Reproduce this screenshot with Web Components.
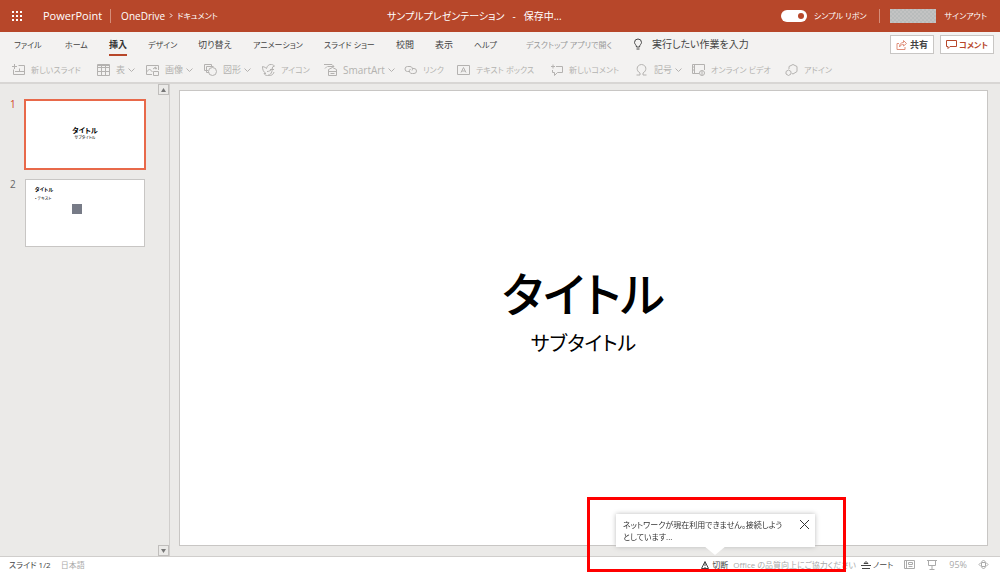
<!DOCTYPE html>
<html lang="ja">
<head>
<meta charset="utf-8">
<title>サンプルプレゼンテーション</title>
<style>
html,body{height:100%}
body{margin:0;font-family:"Open Sans","Noto Sans CJK JP",sans-serif;font-feature-settings:"palt";font-size:10px;line-height:14px;color:#444;background:#ebeae8;overflow:hidden}
</style>
</head>
<body>
<ppt-app></ppt-app>
<script>
const reset = `:host,*{box-sizing:border-box}button,input{font:inherit;font-feature-settings:inherit;color:inherit;border:0;background:none;padding:0;margin:0}button{white-space:nowrap}a{color:inherit;text-decoration:none}svg{display:block;flex:none;fill:none;stroke:currentColor}`;
const define = (name, html) => customElements.define(name, class extends HTMLElement {
  constructor() {
    super();
    const t = document.createElement('template');
    t.innerHTML = typeof html === 'function' ? html(this) : html;
    this.attachShadow({mode: 'open'}).append(t.content.cloneNode(true));
  }
});

const icons = {
  slide: '<path d="M1.500 6.500v5h11v-9h-6M0 3.500h5M2.500 1v5M3 8.500h9M7.500 5.500v3"/>',
  table: '<path d="M.5 1.500h12v11H.5zM.5 4.500h12M.5 8.500h12M4.500 1.500v11M8.500 1.500v11"/><path d="M.5 2.500h12"/>',
  image: '<path d="M6 11.500H.5v-9h12V7M.5 9l3-3 3 3M7.500 8.500h5v4h-5zM7 6l2-1.500L11 6"/><circle cx="9.500" cy="5" r=".7"/>',
  shapes: '<path d="M4 7.500H.5v-6h7V4M5 9.500H2.500v-6h7"/><circle cx="8.500" cy="8.500" r="4"/>',
  bird: '<path d="M.5 3.500c2 .5 3 1 4 2C5 3 7 1 9.500 1.500c1.500 0 2 1 3 1.500l-2 1c0 5-2 8.500-5 8.500-2 0-3-1-3.500-2h2C1.500 9 .5 7 .5 3.500zM5 8.500c2 0 4-1 5-3M6 12c2 1 5 .5 6-3M8 6.500h4"/>',
  smart: '<path d="M0 1.500h8l2 2H3.500M1 5.500l2-2M4.500 12.500v-6l4-2 4 2v6zM4.500 8.500h8M6.500 10.500h4"/>',
  link: '<path d="M6 8.500H3.500a2.500 2.500 0 0 1 0-5H6a2.500 2.500 0 0 1 2 4M6.500 6a2.500 2.500 0 0 0 2 4.500H10a2.500 2.500 0 0 0 0-5H8.500"/>',
  textbox: '<path d="M.5 2.500h12v9H.5zM4 9.500l2.500-5 2.500 5M5 8h3"/>',
  comment: '<path d="M6 3.500h6.500v6h-5l-3 3v-3h-2V7M1 3.500h4M3 1.500v4"/>',
  omega: '<path d="M1.500 12h3.500V10C1 8 1 2 6.500 1.500 12 2 12 8 8 10v2h3.500"/>',
  video: '<path d="M7 10.500H.5v-9h12V7M2.500 1.500v9M.5 4h2M.5 7h2"/><circle cx="10" cy="10" r="2.500"/><path d="M10 8v4"/>',
  addin: '<path d="M4 6V3.500l4-2 4 2v5l-4 2.500-1-.5"/><path d="M3.500 7l2.500 1.500v2.500L3.500 12.500 1 11V8.500z"/>'
};

define('app-header', `<style>${reset}
:host{display:grid;grid-template-columns:387px 1fr auto;align-items:center;height:32px;background:#b7472a;color:#fff}
nav,.right{display:flex;align-items:center}
.name{font-size:11px;margin:0 8px 0 20px}
.rule{width:1px;height:14px;background:#d58d79}
nav{padding-left:11px}
nav .rule{margin-right:10px}
.sep{margin:0 4px}
.doc{display:flex;gap:8px;white-space:nowrap}
label{display:flex;align-items:center;gap:7px}
input{appearance:none;width:26px;height:12px;border-radius:6px;background:#fff;position:relative}
input::after{content:"";position:absolute;right:3px;top:3px;width:6px;height:6px;border-radius:50%;background:#b7472a}
.right{padding-right:13px;white-space:nowrap;font-size:8px}
.right .rule{margin:0 10px 0 13px}
.user{width:46px;height:14px;background:repeating-conic-gradient(#b9bcbc 0 25%,#c3c3c3 0 50%) 0 0/4px 4px;margin-right:8px}
.crumb{font-size:8px}
</style>
<nav aria-label="パス">
<button aria-label="アプリ起動ツール"><svg width="12" height="12" style="fill:#fff;stroke:none"><path d="M1 1h2v2H1zM5 1h2v2H5zM9 1h2v2H9zM1 5h2v2H1zM5 5h2v2H5zM9 5h2v2H9zM1 9h2v2H1zM5 9h2v2H5zM9 9h2v2H9z"/></svg></button>
<a class="name" href="#">PowerPoint</a><span class="rule"></span><a href="#">OneDrive</a>
<svg class="sep" width="4" height="8"><path d="M1 1.500l2 2-2 2"/></svg><a class="crumb" href="#">ドキュメント</a></nav>
<div class="doc"><span>サンプルプレゼンテーション</span><span>-</span><span>保存中...</span></div>
<div class="right"><label><input type="checkbox" role="switch" checked><span>シンプル リボン</span></label><span class="rule"></span><span class="user"></span><a href="#">サインアウト</a></div>`);

define('ribbon-tab', e => `<style>${reset}
:host{display:block}
button{height:24px;padding-top:3px;border-bottom:2px solid transparent;font-size:9px}
:host([compact]) button{font-size:8px}
:host([selected]) button{font-weight:700;color:#333;border-color:#b7472a}
:host([muted]) button{color:#999}
</style><button role="tab" aria-selected="${e.hasAttribute('selected')}"><slot></slot></button>`);

define('ribbon-tool', e => `<style>${reset}
:host{display:block;color:#b4b2b0}
button{display:flex;align-items:center;height:24px;font-size:9px;color:inherit}
:host([compact]) button{font-size:8px}
:host([latin]) button{font-size:10px}
.icon{margin-right:5px}
.chev{margin-left:3px}
</style><button disabled><svg class="icon" width="14" height="14" aria-hidden="true">${icons[e.getAttribute('icon')]}</svg><slot></slot>${e.hasAttribute('menu') ? '<svg class="chev" width="7" height="6"><path d="M.5 1.500l3 3 3-3"/></svg>' : ''}</button>`);

define('app-ribbon', `<style>${reset}
:host{display:block;height:52px;background:#f3f2f1;border-bottom:2px solid #d8d6d4}
.top{display:flex;justify-content:space-between;padding:0 6px 0 14px;height:25px}
.tabs{display:grid;grid-template-columns:51px 44px 39px 50px 55px 71px 72px 39px 39px 52px 107px auto}
label{display:flex;align-items:center;height:24px;gap:9px}
input{width:120px}
input::placeholder{color:#444;opacity:1}
.actions{display:flex;gap:6px;padding-top:3px}
.actions button{display:flex;align-items:center;justify-content:center;gap:3px;height:19px;padding:0 5px;border:1px solid #c8c6c4;background:#fff;font-size:9px;font-weight:700}
.actions .c{color:#b7472a;gap:2px;font-size:8px}
.share{color:#e0907b}
.tools{display:grid;grid-template-columns:85px 49px 58px 58px 62px 80px 53px 93px 85px 57px 93px auto;padding:1px 0 0 12px}
</style>
<div class="top"><div class="tabs" role="tablist">
<ribbon-tab compact>ファイル</ribbon-tab><ribbon-tab compact>ホーム</ribbon-tab><ribbon-tab selected>挿入</ribbon-tab><ribbon-tab compact>デザイン</ribbon-tab><ribbon-tab>切り替え</ribbon-tab><ribbon-tab compact>アニメーション</ribbon-tab><ribbon-tab compact>スライド ショー</ribbon-tab><ribbon-tab>校閲</ribbon-tab><ribbon-tab>表示</ribbon-tab><ribbon-tab compact>ヘルプ</ribbon-tab><ribbon-tab muted compact>デスクトップ アプリで開く</ribbon-tab>
<label><svg width="10" height="13"><path d="M3.500 9C3.500 7 1.500 6 1.500 4.500a3.500 3.500 0 0 1 7 0C8.500 6 6.500 7 6.500 9zM3.500 11h3"/></svg><input type="text" aria-label="実行したい作業を入力" placeholder="実行したい作業を入力"></label></div>
<div class="actions"><button><svg class="share" width="11" height="11"><path d="M3 4.500H1v6h8V8M3.500 8c0-3 1.500-4.500 4-4.500V1.500L10.500 4.500l-3 2.500V5.500c-2 0-3 .5-4 2.500z"/></svg>共有</button><button class="c"><svg width="11" height="10"><path d="M.5.5h10v6H4L2 8.500v-2H.5z"/></svg>コメント</button></div></div>
<div class="tools" role="toolbar">
<ribbon-tool icon="slide" compact>新しいスライド</ribbon-tool><ribbon-tool icon="table" menu>表</ribbon-tool><ribbon-tool icon="image" menu>画像</ribbon-tool><ribbon-tool icon="shapes" menu>図形</ribbon-tool><ribbon-tool icon="bird" compact>アイコン</ribbon-tool><ribbon-tool icon="smart" latin menu>SmartArt</ribbon-tool><ribbon-tool icon="link" compact>リンク</ribbon-tool><ribbon-tool icon="textbox" compact>テキスト ボックス</ribbon-tool><ribbon-tool icon="comment" compact>新しいコメント</ribbon-tool><ribbon-tool icon="omega" menu>記号</ribbon-tool><ribbon-tool icon="video" compact>オンライン ビデオ</ribbon-tool><ribbon-tool icon="addin" compact>アドイン</ribbon-tool></div>`);

define('slide-thumb', e => `<style>${reset}
:host{display:grid;grid-template-columns:14px 122px;color:#666}
.num{font-size:10px;line-height:10px}
.page{border:1px solid #c8c6c4;background:#fff;margin:0 1px;height:68px;color:#000}
:host([selected]){color:#d24726}
:host([selected]) .page{border:2px solid #e8694a;margin:0;height:71px}
</style><span class="num">${e.getAttribute('number')}</span><div class="page"><slot></slot></div>`);

define('slide-pane', `<style>${reset}
:host{display:flex;justify-content:space-between;border-right:1px solid #d0cecc}
.list{display:flex;flex-direction:column;gap:9px;padding:15px 0 0 10px}
.bar{display:flex;flex-direction:column;justify-content:space-between}
.bar button{width:11px;height:11px;border:1px solid #c0bebc;display:grid;place-items:center}
.bar svg{fill:#777;stroke:none}
.cover{display:flex;flex-direction:column;align-items:center;padding-top:25px}
.t{font-size:7px;line-height:9px;font-weight:700}
.s{font-size:4px;line-height:5px}
.body{padding:5px 9px}
.u{font-size:5px;line-height:8px;font-weight:700}
.v{font-size:4px;line-height:11px}
.box{width:10px;height:10px;background:#777b87;margin-left:37px}
</style>
<div class="list"><slide-thumb number="1" selected><div class="cover"><span class="t">タイトル</span><span class="s">サブタイトル</span></div></slide-thumb>
<slide-thumb number="2"><div class="body"><div class="u">タイトル</div><div class="v">• テキスト</div><div class="box"></div></div></slide-thumb></div>
<div class="bar"><button aria-label="上へ"><svg width="5" height="4"><path d="M0 4l2.500-4L5 4z"/></svg></button><button aria-label="下へ"><svg width="5" height="4"><path d="M0 0l2.500 4L5 0z"/></svg></button></div>`);

define('slide-canvas', `<style>${reset}
:host{display:flex;flex-direction:column;align-items:center;justify-content:center;margin:6px 12px 10px 9px;border:1px solid #c8c6c4;background:#fff;color:#000}
h1{font-size:47px;line-height:56px;font-weight:500;margin:0}
p{font-size:20px;line-height:28px;margin:8px 0 12px}
</style><h1>タイトル</h1><p>サブタイトル</p>`);

define('status-bar', `<style>${reset}
:host{display:flex;justify-content:space-between;align-items:center;height:15px;background:#fff;padding:0 11px 0 9px;font-size:8px;white-space:nowrap}
div,button{display:flex;align-items:center}
.l{gap:10px}
.m{color:#aaa}
.r{gap:11px}
.r button{gap:2px}
.notice{gap:5px}
.zoom{font-size:9px}
</style>
<div class="l"><span>スライド 1/2</span><button class="m">日本語</button></div>
<div class="r"><div class="notice"><button><svg width="10" height="10"><path d="M5 1.500l3.500 7h-7zM5 3v3M5 7v1"/></svg>切断</button><a class="m" href="#">Office の品質向上にご協力ください</a>
<button><svg width="10" height="10"><path d="M0 5.500h10M1 8.500h8M3 3.500h4l-2-2z"/></svg>ノート</button></div>
<button class="m" aria-label="標準表示"><svg width="11" height="10"><path d="M.5.5h10v8H.5zM2.500.5v8M4.500 2.500h4v2h-4zM4.500 6.500h4"/></svg></button>
<button class="m" aria-label="スライド ショー"><svg width="12" height="10"><path d="M1 .5h10M2.500.5v5h7v-5M6 5.500v4M3.500 9.500h5"/></svg></button>
<button class="m zoom">95%</button>
<button class="m" aria-label="ウィンドウに合わせる"><svg width="11" height="11"><path d="M3.500 3.500h4v4h-4zM3.500 3L5.500 1l2 2M3.500 8l2 2 2-2M3 3.500L1 5.500l2 2M8 3.500l2 2-2 2"/></svg></button></div>`);

define('network-callout', `<style>${reset}
:host{position:fixed;right:185px;bottom:25px;display:flex;justify-content:space-between;width:199px;height:33px;padding:5px 5px 0 7px;background:#fff;box-shadow:0 0 5px #bbb;font-size:8px;line-height:12px;color:#333}
:host::after{content:"";position:absolute;left:88px;top:32px;border:11px solid transparent;border-top:9px solid #fff;border-bottom:0}
p{margin:0;white-space:nowrap}
button{height:11px}
</style><p>ネットワークが現在利用できません。接続しよう<br>としています...</p><button aria-label="閉じる"><svg width="11" height="11"><path d="M1 1l9 9M10 1l-9 9"/></svg></button>`);

define('highlight-frame', `<style>:host{position:fixed;box-sizing:border-box;right:154px;bottom:0;width:259px;height:75px;border:3px solid #f00;pointer-events:none}</style>`);

define('ppt-app', `<style>
:host{display:flex;flex-direction:column;height:100vh}
main{flex:1;display:grid;grid-template-columns:170px 1fr;min-height:0;border-bottom:1px solid #d0cecc}
</style><app-header></app-header><app-ribbon></app-ribbon><main><slide-pane></slide-pane><slide-canvas></slide-canvas></main><status-bar></status-bar><network-callout role="status"></network-callout><highlight-frame></highlight-frame>`);
</script>
</body>
</html>
